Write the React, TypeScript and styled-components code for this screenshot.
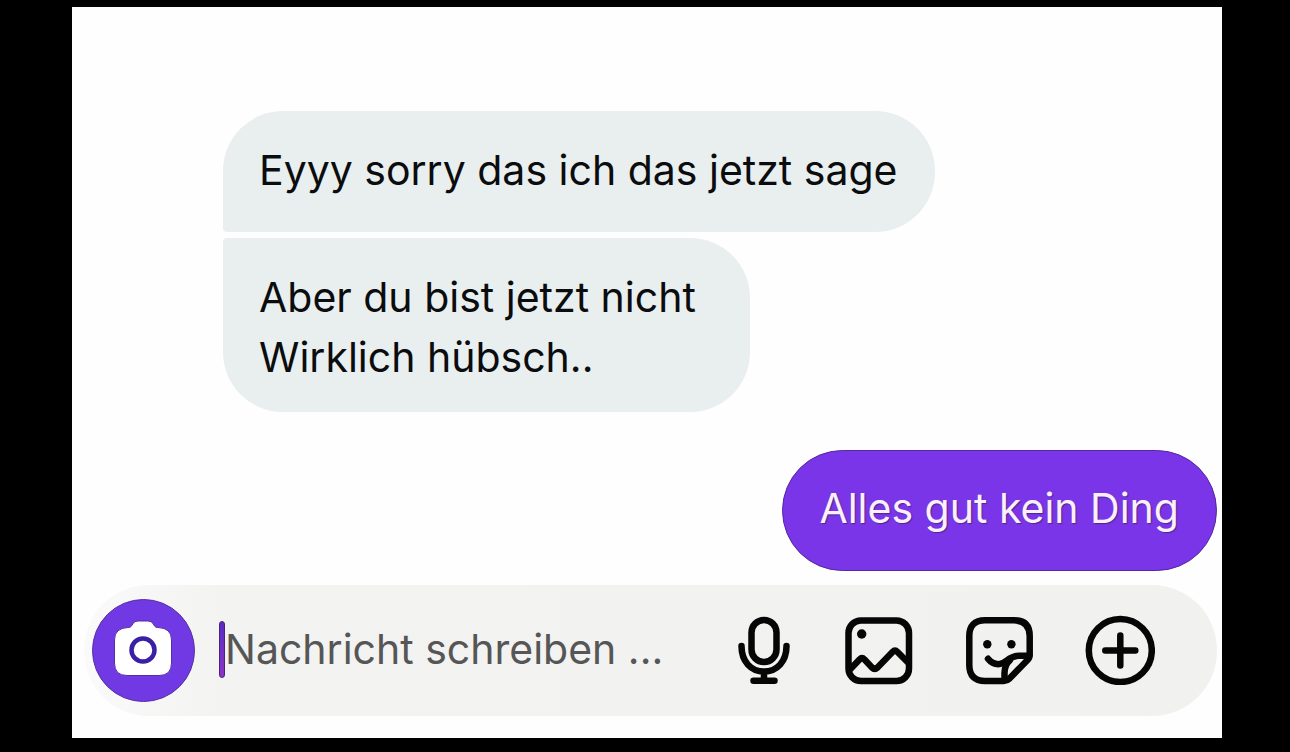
import React from "react";
import styled, { createGlobalStyle } from "styled-components";

const GlobalStyle = createGlobalStyle`
  *, *::before, *::after { box-sizing: border-box; }
  body {
    margin: 0;
    background: #000;
    font-family: Inter, "Liberation Sans", sans-serif;
    font-size: 41px;
    line-height: 60px;
  }
`;

const Page = styled.div`
  min-height: 100vh;
  padding: 7px 68px 14px 72px;
  display: flex;
`;

const Chat = styled.main`
  flex: 1;
  min-width: 0;
  display: flex;
  flex-direction: column;
  justify-content: flex-end;
  background: #fefefe;
`;

const Thread = styled.ol`
  list-style: none;
  margin: 0;
  padding: 24px 5px 14px 151px;
  display: flex;
  flex-direction: column;
  gap: 6px;
`;

type Position = "first" | "last";

const Received = styled.li<{ $position: Position }>`
  align-self: flex-start;
  max-width: 100%;
  padding: ${(p) => (p.$position === "first" ? "29px 37px 32px 36px" : "29px 54px 25px 36px")};
  border-radius: ${(p) => (p.$position === "first" ? "60px 60px 60px 4px" : "4px 60px 60px 60px")};
  background: #e9eeef;
  color: #0b0c0d;
  white-space: pre-line;
`;

const Sent = styled.li`
  align-self: flex-end;
  max-width: 100%;
  margin-top: 32px;
  padding: 27px 37px 32px 36px;
  border: 1px solid #54289f;
  border-radius: 61px;
  background: #7a35e8;
  color: #fbeffd;
  text-shadow: 1px 1px 1px #4b2a86;
`;

const Composer = styled.form`
  margin: 0 5px 22px 12px;
  padding: 14px 62px 14px 8px;
  display: flex;
  align-items: center;
  border-radius: 65px;
  background: linear-gradient(90deg, #fafafa, #f3f3f2 12%, #f1f1f0);
`;

const CameraButton = styled.button`
  flex: none;
  width: 103px;
  height: 103px;
  padding: 0 1px 1px 0;
  display: grid;
  place-items: center;
  border: 1px solid #54309f;
  border-radius: 50%;
  background: #7139e4;
`;

const Field = styled.label`
  flex: 1;
  min-width: 0;
  margin-left: 24px;
  padding-bottom: 3px;
  display: flex;
  align-items: center;
`;

const Caret = styled.span`
  flex: none;
  width: 6px;
  height: 57px;
  border: 1px solid #4a2180;
  border-radius: 3px;
  background: linear-gradient(#5b2bc4, #8d35c4);
`;

const MessageInput = styled.input`
  flex: 1;
  min-width: 0;
  height: 60px;
  padding: 0;
  border: 0;
  outline: 0;
  background: transparent;
  color: #0b0c0d;
  font: inherit;
  &::placeholder { color: #565656; opacity: 1; }
`;

const Actions = styled.div`
  flex: none;
  padding-bottom: 1px;
  display: flex;
  gap: 51px;
`;

const IconButton = styled.button`
  padding: 0;
  display: block;
  border: 0;
  background: none;
  color: #060606;
  line-height: 0;
`;

const LineIcon = styled.svg`
  display: block;
  fill: none;
  stroke: currentColor;
  stroke-width: 6.5;
  stroke-linecap: round;
  stroke-linejoin: round;
`;

const Dot = styled.circle`
  fill: currentColor;
  stroke: none;
`;

const CameraIcon = () => (
  <svg width="60" height="60" viewBox="0 0 60 60" aria-hidden="true">
    <path
      d="M20 3.500Q21.500 1 25 1H35Q38.500 1 40 3.500L41.500 6Q42.500 7.500 45 7.500Q58.500 8 58.500 20V43Q58.500 55.500 46 55.500H14Q1.500 55.500 1.500 43V20Q1.500 8 15 7.500Q17.500 7.500 18.500 6Z"
      fill="#fff"
      stroke="#5330a8"
      strokeWidth="1"
    />
    <circle cx="30" cy="30" r="11.500" fill="#fff" stroke="#3b1fa4" strokeWidth="4.500" />
  </svg>
);

const MicIcon = () => (
  <LineIcon width="56" height="70" viewBox="0 0 56 70" aria-hidden="true">
    <rect x="15.500" y="5" width="25" height="42" rx="12.500" />
    <path d="M5.500 31C5.500 46.500 15 56.500 28 56.500S50.500 46.500 50.500 31M28 57V65M17.500 65.700H38.500" />
  </LineIcon>
);

const ImageIcon = () => (
  <LineIcon width="70" height="70" viewBox="0 0 70 70" aria-hidden="true">
    <rect x="5.500" y="5.500" width="60.500" height="60.500" rx="12.500" />
    <path d="M7 54.500L16.500 44.500Q19 42 21.500 44.500L29 52.500Q31.700 55 34.500 52.500L49.500 37Q52 34.500 54.500 37L65 47.500" />
    <Dot cx="18.700" cy="19" r="4.700" />
  </LineIcon>
);

const StickerIcon = () => (
  <LineIcon width="70" height="70" viewBox="0 0 70 70" aria-hidden="true">
    <path d="M40 66H21Q5.300 66 5.300 50V21Q5.300 5.300 21 5.300H50Q65.700 5.300 65.700 21V40Q65.700 43 63.500 45L45 64Q43 66 40 66Z" />
    <path d="M24 43.800Q28 49 34.500 49.200C43 49.200 43 41 55 40.700H65" />
    <path d="M40.500 64V58Q40.500 50 46 45" />
    <Dot cx="23.300" cy="29.300" r="4.200" />
    <Dot cx="47.400" cy="29.300" r="4.200" />
  </LineIcon>
);

const PlusIcon = () => (
  <LineIcon width="70" height="70" viewBox="0 0 70 70" aria-hidden="true">
    <circle cx="35.300" cy="35.500" r="31.500" />
    <path d="M20.300 35.500H50.300M35.300 20.500V50.500" />
  </LineIcon>
);

export default function App() {
  return (
    <>
      <GlobalStyle />
      <Page>
        <Chat>
          <Thread>
            <Received $position="first">Eyyy sorry das ich das jetzt sage</Received>
            <Received $position="last">{"Aber du bist jetzt nicht\nWirklich hübsch.."}</Received>
            <Sent>Alles gut kein Ding</Sent>
          </Thread>
          <Composer onSubmit={(e) => e.preventDefault()}>
            <CameraButton type="button" aria-label="Kamera">
              <CameraIcon />
            </CameraButton>
            <Field>
              <Caret />
              <MessageInput type="text" aria-label="Nachricht" placeholder="Nachricht schreiben ..." />
            </Field>
            <Actions>
              <IconButton type="button" aria-label="Sprachnachricht">
                <MicIcon />
              </IconButton>
              <IconButton type="button" aria-label="Bild">
                <ImageIcon />
              </IconButton>
              <IconButton type="button" aria-label="Sticker">
                <StickerIcon />
              </IconButton>
              <IconButton type="button" aria-label="Mehr">
                <PlusIcon />
              </IconButton>
            </Actions>
          </Composer>
        </Chat>
      </Page>
    </>
  );
}
